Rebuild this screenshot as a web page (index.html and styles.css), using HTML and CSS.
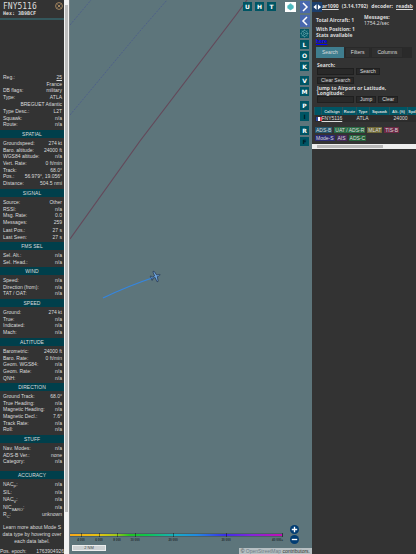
FILE: index.html
```html
<!DOCTYPE html>
<html lang="en">
<head>
<meta charset="utf-8">
<title>tar1090</title>
<link rel="stylesheet" href="styles.css">
</head>
<body>
<div class="app">
  <aside class="info">
    <div class="info-body">
      <header class="ident">
        <div>
          <h1>FNY5116</h1>
          <p class="hex">Hex: 3B9BCF</p>
        </div>
        <button class="close" aria-label="Close"><svg viewBox="0 0 16 16"><circle cx="8" cy="8" r="6.8"/><path d="M5 5l6 6M11 5l-6 6"/></svg></button>
      </header>
      <div class="photo"></div>
      <dl class="rows">
        <div><dt>Reg.:</dt><dd><a href="#">25</a></dd></div>
        <div><dt></dt><dd>France</dd></div>
        <div><dt>DB flags:</dt><dd>military</dd></div>
        <div><dt>Type:</dt><dd>ATLA</dd></div>
        <div><dt></dt><dd>BREGUET Atlantic</dd></div>
      </dl>
      <dl class="rows spaced">
        <div><dt>Type Desc.:</dt><dd>L2T</dd></div>
        <div><dt>Squawk:</dt><dd>n/a</dd></div>
        <div><dt>Route:</dt><dd>n/a</dd></div>
      </dl>
      <h2>SPATIAL</h2>
      <dl class="rows">
        <div><dt>Groundspeed:</dt><dd>274 kt</dd></div>
        <div><dt>Baro. altitude:</dt><dd>24000 ft</dd></div>
        <div><dt>WGS84 altitude:</dt><dd>n/a</dd></div>
        <div><dt>Vert. Rate:</dt><dd>0 ft/min</dd></div>
        <div><dt>Track:</dt><dd>68.0°</dd></div>
        <div><dt>Pos.:</dt><dd>56.979°, 19.056°</dd></div>
        <div><dt>Distance:</dt><dd>504.5 nmi</dd></div>
      </dl>
      <h2>SIGNAL</h2>
      <dl class="rows">
        <div><dt>Source:</dt><dd>Other</dd></div>
        <div><dt>RSSI:</dt><dd>n/a</dd></div>
        <div><dt>Msg. Rate:</dt><dd>0.0</dd></div>
        <div><dt>Messages:</dt><dd>259</dd></div>
      </dl>
      <dl class="rows spaced">
        <div><dt>Last Pos.:</dt><dd>27 s</dd></div>
        <div><dt>Last Seen:</dt><dd>27 s</dd></div>
      </dl>
      <h2>FMS SEL</h2>
      <dl class="rows">
        <div><dt>Sel. Alt.:</dt><dd>n/a</dd></div>
        <div><dt>Sel. Head.:</dt><dd>n/a</dd></div>
      </dl>
      <h2>WIND</h2>
      <dl class="rows">
        <div><dt>Speed:</dt><dd>n/a</dd></div>
        <div><dt>Direction (from):</dt><dd>n/a</dd></div>
        <div><dt>TAT / OAT:</dt><dd>n/a</dd></div>
      </dl>
      <h2>SPEED</h2>
      <dl class="rows">
        <div><dt>Ground:</dt><dd>274 kt</dd></div>
        <div><dt>True:</dt><dd>n/a</dd></div>
        <div><dt>Indicated:</dt><dd>n/a</dd></div>
        <div><dt>Mach:</dt><dd>n/a</dd></div>
      </dl>
      <h2>ALTITUDE</h2>
      <dl class="rows">
        <div><dt>Barometric:</dt><dd>24000 ft</dd></div>
        <div><dt>Baro. Rate:</dt><dd>0 ft/min</dd></div>
        <div><dt>Geom. WGS84:</dt><dd>n/a</dd></div>
        <div><dt>Geom. Rate:</dt><dd>n/a</dd></div>
        <div><dt>QNH:</dt><dd>n/a</dd></div>
      </dl>
      <h2>DIRECTION</h2>
      <dl class="rows">
        <div><dt>Ground Track:</dt><dd>68.0°</dd></div>
        <div><dt>True Heading:</dt><dd>n/a</dd></div>
        <div><dt>Magnetic Heading:</dt><dd>n/a</dd></div>
        <div><dt>Magnetic Decl.:</dt><dd>7.6°</dd></div>
        <div><dt>Track Rate:</dt><dd>n/a</dd></div>
        <div><dt>Roll:</dt><dd>n/a</dd></div>
      </dl>
      <h2>STUFF</h2>
      <dl class="rows stuff">
        <div><dt>Nav. Modes:</dt><dd>n/a</dd></div>
        <div><dt>ADS-B Ver.:</dt><dd>none</dd></div>
        <div><dt>Category:</dt><dd>n/a</dd></div>
      </dl>
      <h2>ACCURACY</h2>
      <dl class="rows accuracy">
        <div><dt>NAC<sub>P</sub>:</dt><dd>n/a</dd></div>
        <div><dt>SIL:</dt><dd>n/a</dd></div>
        <div><dt>NAC<sub>V</sub>:</dt><dd>n/a</dd></div>
        <div><dt>NIC<sub>BARO</sub>:</dt><dd>n/a</dd></div>
        <div><dt>R<sub>C</sub>:</dt><dd>unknown</dd></div>
      </dl>
      <p class="learn">Learn more about Mode S<br>data type by hovering over<br>each data label.</p>
      <dl class="rows epoch">
        <div><dt>Pos. epoch:</dt><dd>1763904926</dd></div>
      </dl>
    </div>
    <div class="vbar"><span class="vthumb"></span></div>
  </aside>

  <main class="map">
    <svg class="chart" viewBox="0 0 242 554" preserveAspectRatio="xMinYMin slice" aria-hidden="true">
      <g fill="none">
        <path d="M0 25L21 0M0 115L70 31L97 0" stroke="#4a5b8c" stroke-width="0.8" stroke-dasharray="2 1.2"/>
        <path d="M0 239L70 141L166 15L177 0" stroke="#64495a" stroke-width="1.2"/>
        <path d="M33 298Q58 286 85 277" stroke="#3486e0" stroke-width="1.3"/>
      </g>
      <g transform="translate(85.5 276.500) rotate(68)">
        <path d="M0-5C.7-4.500.8-3 .8-1.700L5.500-.6V.6L.8.700 .5 3 2.200 4V4.800L0 4.500-2.200 4.800V4L-.5 3-.8.700-5.500.6V-.6L-.8-1.700C-.8-3-.7-4.500 0-5Z" fill="#6fa5dc" stroke="#1c2c48" stroke-width="0.6"/>
      </g>
    </svg>

    <div class="modes">
      <button>U</button><button>H</button><button>T</button>
      <button class="layers" aria-label="Layers"><svg viewBox="0 0 20 20"><path d="M3 8l7-6 7 6-7 6z" fill="#8ad0d2"/><path d="M3 12l7 5 7-5-7-6z" fill="#8ad0d2"/><path d="M4 8l6-4 6 4v4l-6 4-6-4z" fill="#4cb9be"/></svg></button>
    </div>
    <div class="tools">
      <button class="arrow" aria-label="Expand"><svg viewBox="0 0 10 12"><path d="M3 2l4 4-4 4"/></svg></button>
      <button class="arrow" aria-label="Collapse"><svg viewBox="0 0 10 12"><path d="M7 2L3 6l4 4"/></svg></button>
      <button class="gear" aria-label="Settings"><svg viewBox="0 0 18 18"><circle cx="9" cy="9" r="6"/><circle cx="9" cy="9" r="2"/><path d="M9 1v2M9 15v2M1 9h2M15 9h2M3.400 3.400l1.400 1.400M13.200 13.200l1.400 1.400M14.600 3.400l-1.400 1.400M3.400 14.600l1.400-1.400M11 9h4M8 7.300L6 3.800M8 10.700l-2 3.500"/></svg></button>
      <button>L</button><button>O</button><button>K</button>
      <button class="group">V</button><button>M</button>
      <button class="group">P</button><button class="off">I</button>
      <button class="group">R</button><button class="off">F</button>
    </div>

    <div class="legend">
      <div class="ramp"></div>
      <div class="ticks"><span>4 000</span><span>6 000</span><span>8 000</span><span>10 000</span><span>20 000</span><span>30 000</span><span>40 000+</span></div>
    </div>
    <div class="scale">2 NM</div>
    <div class="zooms">
      <button aria-label="Zoom in"><svg viewBox="0 0 10 10"><path d="M2 5h6M5 2v6"/></svg></button>
      <button aria-label="Zoom out"><svg viewBox="0 0 10 10"><path d="M2 5h6"/></svg></button>
    </div>
    <p class="credit">© <a href="#">OpenStreetMap</a> contributors.</p>
  </main>

  <section class="panel">
    <header class="top">
      <button class="split" aria-label="Resize"><svg viewBox="0 0 11 11"><path d="M5 2.500v6L1.500 5.500zM6.500 2.500v6L10 5.500z" fill="#fff"/></svg></button>
      <p><a href="#">ar1090</a> <span>(3.14.1792)</span> <span>decoder:</span> <a href="#">readsb</a></p>
    </header>
    <div class="stats">
      <div>
        <p>Total Aircraft: 1</p>
        <p class="gap">With Position: 1</p>
        <p>Stats available</p>
        <p><a class="here" href="#">here</a></p>
      </div>
      <div class="msgs"><p>Messages:</p><p>1754.2/sec</p></div>
    </div>
    <nav class="tabs"><button class="on">Search</button><button>Filters</button><button>Columns</button></nav>
    <form class="search">
      <label for="q">Search:</label>
      <div class="line"><input id="q" type="text"><button type="button">Search</button></div>
      <div class="line"><button type="button">Clear Search</button></div>
      <label for="j">Jump to Airport or Latitude,<br>Longitude:</label>
      <div class="line"><input id="j" type="text"><button type="button">Jump</button><button type="button">Clear</button></div>
    </form>
    <div class="list">
      <table>
        <thead><tr><th class="c-flag"></th><th class="c-call">Callsign</th><th class="c-route">Route</th><th class="c-type">Type</th><th class="c-sq">Squawk</th><th class="c-alt">Alt. (ft)</th><th>Spd</th></tr></thead>
        <tbody><tr><td><svg class="flag" viewBox="0 0 6 4"><path fill="#2945a0" d="M0 0h2v4H0z"/><path fill="#fff" d="M2 0h2v4H2z"/><path fill="#e03a3e" d="M4 0h2v4H4z"/></svg></td><td class="call"><a href="#">FNY5116</a></td><td></td><td>ATLA</td><td></td><td class="num">24000</td><td></td></tr></tbody>
      </table>
    </div>
    <ul class="sources">
      <li class="adsb">ADS-B</li><li class="uat">UAT / ADS-R</li><li class="mlat">MLAT</li><li class="tisb">TIS-B</li>
      <li class="modes-s">Mode-S</li><li class="ais">AIS</li><li class="adsc">ADS-C</li>
    </ul>
    <div class="hbar"><span class="hthumb"></span></div>
  </section>
</div>
</body>
</html>
```
FILE: styles.css
```css
* { box-sizing: border-box; }
body { margin: 0; background: #333; color: #dcdcdc; font: 5px/7px "Liberation Sans", sans-serif; }
h1, h2, p, dl, dd, ul { margin: 0; padding: 0; font-weight: normal; }
button, input { font: inherit; color: inherit; border: 0; padding: 0; margin: 0; }
button svg { display: block; width: 100%; height: 100%; fill: none; }
a { color: inherit; }

.app { display: flex; height: 100vh; overflow: hidden; }

/* Aircraft details */
.info { display: flex; flex: 0 0 70px; background: #333; }
.info-body { flex: 1; min-width: 0; overflow: hidden; }
.ident { display: flex; justify-content: space-between; height: 20px; padding: 2px 1px 0 3px; border-bottom: 2px solid #34575c; }
.ident h1 { font: 8px/9px "DejaVu Sans Mono", monospace; }
.hex { font: bold 5px/5px "DejaVu Sans Mono", monospace; }
.close { width: 8px; height: 8px; background: none; }
.close svg { stroke: #c9a06d; stroke-width: 1.5; }
.photo { height: 54px; }
.rows { display: grid; grid-auto-rows: 7px 6px 7px; padding: 0 2px 0 3px; }
.rows > div { display: flex; justify-content: space-between; white-space: nowrap; }
.spaced { margin-top: 1px; }
.info h2 { margin: 2px 0; background: #003f4b; font-size: 5px; line-height: 8px; text-align: center; }
.stuff { margin-bottom: 6px; }
.accuracy { grid-auto-rows: 8px 7px; }
.accuracy sub { font-size: 4px; line-height: 1px; }
.learn { margin: 5px 0 3px; line-height: 7px; text-align: center; white-space: nowrap; }
.epoch { padding: 0; }
.vbar { display: flex; flex: 0 0 6px; background: #f2f2f2; border-right: 1px solid #777f82; padding: 5px 1px 42px; }
.vthumb { flex: 1; background: #bdbdbd; }

/* Map */
.map { position: relative; flex: 1 1 242px; min-width: 0; background: #5d757b; overflow: hidden; }
.chart { display: block; width: 100%; height: 100%; }
.modes { position: absolute; top: 2px; right: 16px; display: flex; gap: 3px; }
.modes button, .tools button { width: 9px; height: 9px; background: #005564; color: #fff; font: bold 6px/9px "DejaVu Sans", sans-serif; text-align: center; }
.modes .layers { width: 11px; height: 10px; margin-left: 6px; background: #fff; }
.tools { position: absolute; top: 1px; right: 2px; display: flex; flex-direction: column; gap: 2px; }
.tools .arrow { width: 10px; height: 12px; background: #4868ae; }
.arrow svg { stroke: #fff; stroke-width: 1.5; }
.gear svg { stroke: #7fb9bf; stroke-width: 1; }
.tools .group { margin-top: 3px; }
.tools .off { color: #001a24; }
.legend { position: absolute; left: 0; right: 29px; bottom: 11px; }
.ramp { height: 4px; border: 1px solid #4b6066; border-left: 0; background: linear-gradient(90deg, #f7a81b, #e3c313 14%, #9cc61b 22%, #22c322 28%, #10c44b 36%, #17adc4 50%, #2288e0 60%, #3b2fe8 73%, #8424d8 86%, #c30fb4); }
.ticks { display: grid; grid-template-columns: 18fr 18fr 18fr 18fr 58fr 48fr 33fr; padding-left: 2px; font-size: 3px; font-weight: bold; line-height: 6px; text-align: center; color: #1d2c30; }
.ticks span { position: relative; white-space: nowrap; }
.ticks span::before { content: ""; position: absolute; left: 50%; bottom: 100%; width: 1px; height: 4px; background: rgba(0, 0, 0, 0.4); }
.ticks span:last-child { text-align: right; }
.ticks span:last-child::before { left: auto; right: 0; }
.scale { position: absolute; left: 2px; bottom: 3px; width: 34px; height: 6px; background: #cdd2d4; border: 1px solid #eceeee; color: #444; font-size: 4px; line-height: 4px; text-align: center; }
.zooms { position: absolute; right: 13px; bottom: 10px; display: grid; gap: 1px; }
.zooms button { width: 9px; height: 9px; border-radius: 50%; background: #003c72; }
.zooms svg { stroke: #fff; stroke-width: 1.5; }
.credit { position: absolute; right: 0; bottom: 0; padding: 0 2px; background: #b7c0c3; color: #333; line-height: 6px; white-space: nowrap; }
.credit a { color: #6d7b83; text-decoration: none; }

/* Side panel */
.panel { flex: 0 0 104px; min-width: 0; overflow: hidden; background: #333; }
.top { display: flex; height: 14px; padding: 2px 3px 0 0; }
.top p { flex: 1; display: flex; justify-content: space-between; font: bold 5px/9px "Noto Sans", sans-serif; white-space: nowrap; }
.split { flex: none; width: 10px; height: 10px; background: #1c3f6b; }
.stats { display: flex; height: 33px; padding: 3px 4px 0; font: bold 5px/6px "Noto Sans", sans-serif; }
.stats > div { flex: 1; }
.gap { margin-top: 3px; }
.stats .msgs { margin-top: -3px; }
.msgs p + p { font-weight: normal; }
.stats p { font-weight: bold; }
.here { color: #00f; }
.tabs { display: flex; gap: 1px; margin: 0 4px; background: #2a2a2a; }
.tabs button { height: 11px; padding: 0 5px; background: #303030; border: 1px solid #292929; line-height: 9px; }
.tabs .on { background: #3f7d8e; border-color: #3f7d8e; }
.search { margin: 5px 5px 0; }
.search label { display: block; font: bold 5px/5px "Noto Sans", sans-serif; }
.search .line { display: flex; gap: 2px; margin-bottom: 2px; }
.search input { width: 37px; height: 7px; background: #292929; border: 1px solid #1f1f1f; }
.search button { height: 7px; padding: 0 3px; background: #292929; border: 1px solid #202020; line-height: 5px; }
.list { margin: 4px 0 0 2px; }
table { width: 100%; table-layout: fixed; border-collapse: collapse; }
th, td { padding: 0; height: 7px; line-height: 7px; white-space: nowrap; }
th { height: 8px; background: #005564; font-size: 4px; border-left: 1px solid #26535c; }
tbody { background: #2c2c2c; }
.c-flag { width: 7px; }
.c-call { width: 21px; }
.c-route { width: 14px; }
.c-type { width: 13px; }
.c-sq { width: 20px; }
.c-alt { width: 18px; }
.flag { display: block; width: 6px; height: 4px; margin-left: 1px; }
td.num { text-align: right; }
.sources { display: flex; flex-wrap: wrap; gap: 2px; margin: 5px 4px 0 3px; padding: 0; list-style: none; }
.sources li { padding: 0 1px; line-height: 6px; }
.adsb { background: #25556c; }
.uat { background: #2b6b45; }
.mlat { background: #706a38; }
.tisb { background: #6c2945; }
.modes-s { background: #2a2a72; }
.ais { background: #45295c; }
.adsc { background: #24633a; }
.hbar { height: 5px; margin-top: 3px; padding: 1px 5px; background: #eee; }
.hthumb { display: block; width: 70%; height: 3px; background: #b8b8b8; }
```
